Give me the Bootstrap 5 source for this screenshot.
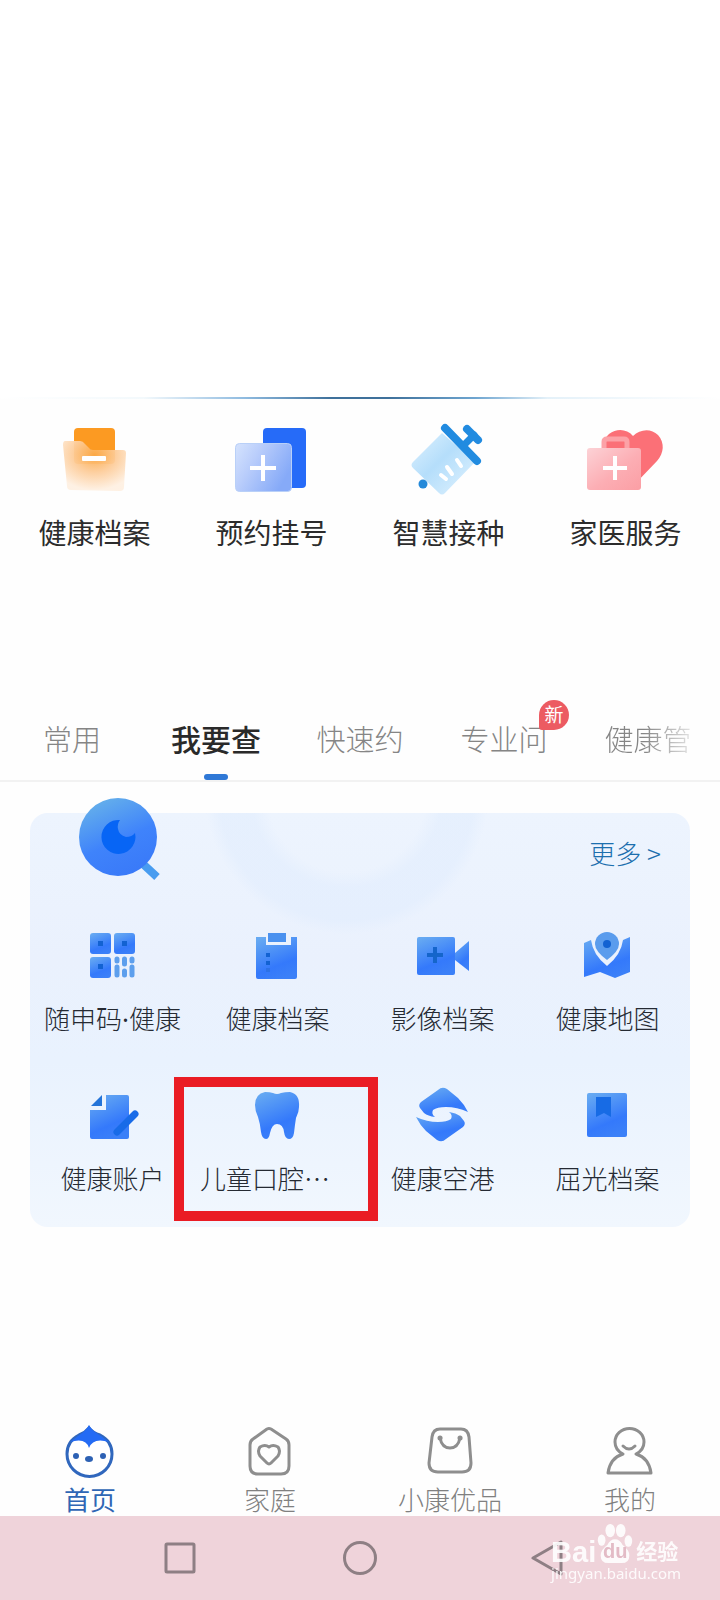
<!DOCTYPE html>
<html lang="zh-CN">
<head>
<meta charset="utf-8">
<meta name="viewport" content="width=device-width, initial-scale=1">
<title>健康首页</title>
<link href="https://cdn.jsdelivr.net/npm/bootstrap@5.3.0/dist/css/bootstrap.min.css" rel="stylesheet">
<style>
  body { font-family: "Noto Sans CJK SC", sans-serif; background: #fefefe; color: #2c2c2c; }
  svg { display: block; flex: none; }
  a, button { color: inherit; text-decoration: none; }
  .hero { height: 397px; background: #fff; }
  .hero-edge { height: 2px; background: linear-gradient(90deg, #fff 0%, #f3f9fc 20%, #8fbbe0 34%, #3f719b 46%, #3f719b 54%, #6ea5d0 66%, #e4f1f9 76%, #fff 100%); }
  .services { padding: 13px 6px 0; }
  .service-name { font-size: 28px; line-height: 40px; margin-top: 12px; }
  .tabs { margin-top: 152px; border-bottom: 2px solid #f2f2f2; }
  .tab-btn { flex: 1 1 0; border: 0; background: none; padding: 14px 0 22px; font-size: 29px; line-height: 40px; font-weight: 300; color: #858585; white-space: nowrap; }
  .tab-btn.active { font-size: 30px; font-weight: 500; color: #2a2a2a; }
  .tab-btn.active::after { content: ""; position: absolute; left: 50%; bottom: 0; width: 24px; height: 6px; margin-left: -12px; border-radius: 3px; background: #2f78d6; }
  .fading { background: linear-gradient(90deg, #858585 45%, #e4e4e4 100%); -webkit-background-clip: text; background-clip: text; color: transparent; }
  .new-tag { position: absolute; top: -4px; left: 107px; width: 30px; height: 30px; border-radius: 15px 15px 15px 3px; background: #ec5b62; color: #fff; font-size: 19px; line-height: 28px; font-weight: 400; }
  .panel { margin: 31px 30px 0; border-radius: 18px; padding-bottom: 29px; background: radial-gradient(circle at 48% -5%, transparent 0 80px, #dceafd66 96px 128px, transparent 142px), linear-gradient(180deg, #edf4fe 0%, #eaf1fd 35%, #e9f2fe 60%, #f1f7fe 100%); }
  .panel-head { height: 112px; padding: 20px 29px 0; }
  .lens { position: absolute; top: -16px; left: 47px; }
  .more { font-size: 26px; line-height: 40px; font-weight: 300; color: #1c6fae; }
  .tools { row-gap: 46px; }
  .tool-name { font-size: 26px; line-height: 40px; margin-top: 13px; font-weight: 300; color: #252a33; white-space: nowrap; }
  .mid-dot { font-family: "Noto Sans", sans-serif; font-weight: 400; }
  .tool-cut { align-self: stretch; padding-left: 5px; text-align: left; }
  .highlight { position: absolute; top: -8px; left: -21px; right: -18px; bottom: -23px; border: 10px solid #ea1c24; pointer-events: none; }
  .nav-name { font-size: 26px; line-height: 32px; margin-top: 3px; margin-bottom: 1px; font-weight: 300; color: #808080; }
  .nav-name.on { color: #2f66b5; font-weight: 400; }
  .system { height: 84px; padding: 0 90px; background: #efd3da; }
  .system button { flex: 1 1 0; border: 0; background: none; padding: 0; }
  .watermark { position: absolute; right: 39px; top: 6px; color: #fff; opacity: .9; font-family: "Liberation Sans", "Noto Sans CJK SC", sans-serif; pointer-events: none; }
  .wm-top { height: 42px; }
  .wm-bai { font-size: 29px; line-height: 24px; font-weight: 700; }
  .wm-du { position: absolute; left: 0; right: 0; bottom: 2px; font-size: 20px; line-height: 22px; font-weight: 700; color: #e2b9c4; text-align: center; }
  .wm-cn { font-size: 21px; line-height: 24px; font-weight: 700; margin-left: 2px; }
  .wm-url { font-family: "Noto Sans", sans-serif; font-size: 15px; line-height: 18px; }
</style>
</head>
<body>
<svg width="0" height="0" class="position-absolute" aria-hidden="true">
  <defs>
    <linearGradient id="blue" x1=".2" y1="0" x2=".6" y2="1"><stop offset="0" stop-color="#66a9f2"/><stop offset=".7" stop-color="#3479fb"/><stop offset="1" stop-color="#3b80f8"/></linearGradient>
    <linearGradient id="lensFill" x1=".25" y1="0" x2=".7" y2="1"><stop offset="0" stop-color="#66b1ea"/><stop offset=".55" stop-color="#3f83fb"/><stop offset="1" stop-color="#3979f8"/></linearGradient>
    <linearGradient id="glassBlue" x1="0" y1="0" x2="1" y2=".5"><stop offset="0" stop-color="#d5e3fd"/><stop offset=".4" stop-color="#b9cdfb"/><stop offset="1" stop-color="#86aaf8"/></linearGradient>
    <radialGradient id="glassOrange" cx=".5" cy=".28" r=".7"><stop offset="0" stop-color="#fba947"/><stop offset=".5" stop-color="#fdcd9b"/><stop offset="1" stop-color="#fef0e2"/></radialGradient>
    <linearGradient id="glassCyan" x1="0" y1="0" x2="1" y2="1"><stop offset="0" stop-color="#dff2fe"/><stop offset=".45" stop-color="#b5defb"/><stop offset="1" stop-color="#e1f3fe"/></linearGradient>
    <linearGradient id="glassPink" x1="0" y1="0" x2="1" y2="1"><stop offset="0" stop-color="#fcd2d6"/><stop offset=".55" stop-color="#fcaeb4"/><stop offset="1" stop-color="#fb9ea4"/></linearGradient>
  </defs>
</svg>

<div class="min-vh-100 d-flex flex-column">
  <header>
    <div class="hero"></div>
    <div class="hero-edge"></div>
  </header>

  <main>
    <nav class="services d-flex text-center" aria-label="主要服务">
      <a href="#" class="col-3 d-flex flex-column align-items-center">
        <svg width="100" height="88" viewBox="0 0 100 88"><rect x="29" y="16" width="41" height="36" rx="4" fill="#fc9a22"/><path d="M20 29h15q3 0 5 3l4 4q1 2 4 2h30q3 0 3 3l-2 34q0 4-4 4l-49-1q-4 0-4-4l-4-41q0-4 2-4z" fill="url(#glassOrange)" fill-opacity=".94"/><rect x="37" y="44" width="24" height="5" rx="1" fill="#fff"/></svg>
        <span class="service-name">健康档案</span>
      </a>
      <a href="#" class="col-3 d-flex flex-column align-items-center">
        <svg width="100" height="88" viewBox="0 0 100 88"><rect x="41" y="16" width="43" height="60" rx="4" fill="#266bf8"/><rect x="13.500" y="31.500" width="56" height="48" rx="4" fill="url(#glassBlue)" stroke="#b9d0f8"/><path d="M41 43v26M28 56h26" stroke="#fff" stroke-width="4"/></svg>
        <span class="service-name">预约挂号</span>
      </a>
      <a href="#" class="col-3 d-flex flex-column align-items-center">
        <svg width="100" height="88" viewBox="0 0 100 88"><circle cx="24" cy="72" r="4.500" fill="#2489d9"/><path d="M43 21L76 50L46 81Q43 84 40 81L14 56Q11 53 14 50z" fill="url(#glassCyan)"/><path d="M58 48l4 6M48 55l5 7M42 63l5 4" stroke="#fff" stroke-width="4" stroke-linecap="round"/><g stroke="#218be0" stroke-linecap="round"><path d="M46 16L78 49" stroke-width="8"/><path d="M68 17L79 28" stroke-width="8"/><path d="M75 23L65 33" stroke-width="7"/></g></svg>
        <span class="service-name">智慧接种</span>
      </a>
      <a href="#" class="col-3 d-flex flex-column align-items-center">
        <svg width="100" height="88" viewBox="0 0 100 88"><path d="M57 24C64 17 75 16 82 23C89 31 88 41 81 49L58 73L32 47C25 39 26 28 33 22C41 16 51 17 57 24z" fill="#fb7077"/><path d="M28 38V30Q28 27 31 27H48Q51 27 51 30V38" fill="none" stroke="#fca2a7" stroke-width="5"/><rect x="11" y="36" width="54" height="42" rx="3" fill="url(#glassPink)"/><path d="M39 44v24M27 56h24" stroke="#fff" stroke-width="4"/></svg>
        <span class="service-name">家医服务</span>
      </a>
    </nav>

    <div class="tabs d-flex" role="tablist">
      <button type="button" role="tab" class="tab-btn">常用</button>
      <button type="button" role="tab" class="tab-btn active position-relative" aria-selected="true">我要查</button>
      <button type="button" role="tab" class="tab-btn">快速约</button>
      <button type="button" role="tab" class="tab-btn position-relative">专业问<span class="new-tag">新</span></button>
      <button type="button" role="tab" class="tab-btn"><span class="fading">健康管</span></button>
    </div>

    <section class="panel position-relative">
      <svg class="lens" width="84" height="84" viewBox="0 0 84 84"><path d="M66 67l14 13" stroke="#489cf0" stroke-width="8"/><circle cx="41" cy="40" r="39" fill="url(#lensFill)"/><path d="M43 23A17 17 0 1 0 58 36Q55 40 49 40Q42 38 41 32Q40 27 43 23z" fill="#0765f5"/></svg>
      <div class="panel-head text-end"><a href="#" class="more">更多 &gt;</a></div>
      <div class="tools d-flex flex-wrap text-center">
        <a href="#" class="col-3 d-flex flex-column align-items-center">
          <svg width="60" height="60" viewBox="0 0 60 60"><g fill="url(#blue)"><rect x="7" y="8" width="21" height="21" rx="3"/><rect x="31" y="8" width="21" height="21" rx="3"/><rect x="7" y="32" width="21" height="21" rx="3"/></g><g fill="#1262d2"><rect x="15" y="16" width="5" height="5"/><rect x="39" y="16" width="5" height="5"/><rect x="15" y="39" width="5" height="5"/></g><path d="M34 34v2M41.500 34v5M49 34v2M34 42v8M41.500 46v4M49 42v8" stroke="#5d9fed" stroke-width="5" stroke-linecap="round"/></svg>
          <span class="tool-name">随申码<span class="mid-dot">·</span>健康</span>
        </a>
        <a href="#" class="col-3 d-flex flex-column align-items-center">
          <svg width="60" height="60" viewBox="0 0 60 60"><path d="M8 12h10v8h25v-8h6v40q0 2-2 2H10q-2 0-2-2z" fill="url(#blue)"/><rect x="20" y="8" width="18" height="9" fill="#4a91ef"/><path d="M18 28h4v4h-4zM18 36h4v4h-4z" fill="#1262d2"/><path d="M18 43h4v4h-4z" fill="#2d72e6"/></svg>
          <span class="tool-name">健康档案</span>
        </a>
        <a href="#" class="col-3 d-flex flex-column align-items-center">
          <svg width="60" height="60" viewBox="0 0 60 60"><rect x="4" y="12" width="38" height="38" rx="2" fill="url(#blue)"/><path d="M42 28L56 16V46L42 35z" fill="url(#blue)"/><path d="M22 22v16M14 30h16" stroke="#1565cb" stroke-width="4"/></svg>
          <span class="tool-name">影像档案</span>
        </a>
        <a href="#" class="col-3 d-flex flex-column align-items-center">
          <svg width="60" height="60" viewBox="0 0 60 60"><path d="M6 18L13 15Q15 30 29 41Q43 30 45 15L52 12V47L37 53L22 47L6 52z" fill="url(#blue)"/><path d="M29 35Q17 26 17 19A12 12 0 0 1 41 19Q41 26 29 35z" fill="#5a9ced"/><circle cx="29" cy="19" r="4" fill="#1262d2"/></svg>
          <span class="tool-name">健康地图</span>
        </a>
        <a href="#" class="col-3 d-flex flex-column align-items-center">
          <svg width="60" height="60" viewBox="0 0 60 60"><path d="M23 10H44q2 0 2 2V52q0 2-2 2H9q-2 0-2-2V25H23z" fill="url(#blue)"/><path d="M8 21L19 10V21z" fill="#2474d8"/><path d="M52 29L34 47" stroke="#186be8" stroke-width="7" stroke-linecap="round"/></svg>
          <span class="tool-name">健康账户</span>
        </a>
        <a href="#" class="col-3 d-flex flex-column align-items-center position-relative">
          <svg width="60" height="60" viewBox="0 0 60 60"><path d="M17 7Q22 7 25 8Q29 10 33 8Q37 7 42 7Q52 9 51 22Q51 27 48 33Q47 39 46 48Q45 54 41 54Q37 54 36 47Q35 39 29 39Q24 39 22 48Q21 54 18 54Q14 54 13 47Q12 38 10 32Q7 26 7 20Q7 9 17 7z" fill="url(#blue)"/></svg>
          <span class="tool-name tool-cut">儿童口腔…</span>
          <span class="highlight"></span>
        </a>
        <a href="#" class="col-3 d-flex flex-column align-items-center">
          <svg width="60" height="60" viewBox="0 0 60 60" fill="url(#blue)"><path id="wing" d="M25 5Q29 1 34 4L45 13Q51 19 55 27Q44 22 33 22Q24 22 20 25Q18 29 22 32Q15 31 11 28L7 23Q5 20 8 17z"/><path d="M33 54Q29 58 24 55L13 46Q7 40 3 32Q14 37 25 37Q34 37 38 34Q40 30 36 27Q43 28 47 31L51 36Q53 39 50 42z"/></svg>
          <span class="tool-name">健康空港</span>
        </a>
        <a href="#" class="col-3 d-flex flex-column align-items-center">
          <svg width="60" height="60" viewBox="0 0 60 60"><rect x="9" y="8" width="40" height="44" rx="2" fill="url(#blue)"/><path d="M18 12H33V32L26 28L18 32z" fill="#176be5"/></svg>
          <span class="tool-name">屈光档案</span>
        </a>
      </div>
    </section>
  </main>

  <footer class="mt-auto">
    <nav class="d-flex text-center" aria-label="底部导航">
      <a href="#" class="col-3 d-flex flex-column align-items-center">
        <svg width="60" height="60" viewBox="0 0 60 60"><path d="M29 8Q25 13 19 15Q7 21 7 34A22.500 22.500 0 0 0 52 34Q52 21 40 15Q33 13 29 8z" fill="#fff" stroke="#3067bd" stroke-width="3"/><path d="M29 5Q26 11 18 16L10 22Q26 17 29 28Q33 17 49 22L41 16Q32 11 29 5z" fill="#246bf4"/><circle cx="16" cy="36" r="3" fill="#2d61b4"/><circle cx="43" cy="36" r="3" fill="#2d61b4"/><ellipse cx="29" cy="39" rx="4" ry="3" fill="#2d61b4"/></svg>
        <span class="nav-name on">首页</span>
      </a>
      <a href="#" class="col-3 d-flex flex-column align-items-center">
        <svg width="60" height="60" viewBox="0 0 60 60" fill="none" stroke="#8e8e8e" stroke-width="3" stroke-linejoin="round"><path d="M27 9Q29 8 31 9L46 19Q49 21 49 25V46Q49 54 41 54H18Q10 54 10 46V25Q10 21 13 19z"/><path d="M29 27Q33 24 38 27Q41 31 38 36L31 43Q29 45 27 43L20 36Q17 31 20 27Q25 24 29 27z"/></svg>
        <span class="nav-name">家庭</span>
      </a>
      <a href="#" class="col-3 d-flex flex-column align-items-center">
        <svg width="60" height="60" viewBox="0 0 60 60" fill="none" stroke="#8e8e8e" stroke-width="3" stroke-linecap="round"><path d="M20 9H41Q48 9 49 17L51 43Q51 52 42 52H18Q9 52 9 43L12 17Q13 9 20 9z"/><path d="M20 18Q22 28 30 28Q38 28 40 18"/><path d="M20 18h.1M40 18h.1" stroke-width="5"/></svg>
        <span class="nav-name">小康优品</span>
      </a>
      <a href="#" class="col-3 d-flex flex-column align-items-center">
        <svg width="60" height="60" viewBox="0 0 60 60" fill="none" stroke="#8e8e8e" stroke-width="3" stroke-linecap="round" stroke-linejoin="round"><path d="M23 34Q10 38 8 53H51Q49 38 36 34Q44 30 44 22A14.500 13.500 0 0 0 15 22Q15 30 23 34z"/><path d="M23 26Q29 32 35 26"/></svg>
        <span class="nav-name">我的</span>
      </a>
    </nav>
    <div class="system d-flex align-items-center position-relative">
      <button type="button" class="d-flex justify-content-center" aria-label="多任务"><svg width="36" height="36" viewBox="0 0 36 36" fill="none" stroke="#8e7f84" stroke-width="3"><rect x="4" y="4" width="28" height="28" rx="1"/></svg></button>
      <button type="button" class="d-flex justify-content-center" aria-label="主屏幕"><svg width="36" height="36" viewBox="0 0 36 36" fill="none" stroke="#8e7f84" stroke-width="3"><circle cx="18" cy="18" r="15.500"/></svg></button>
      <button type="button" class="d-flex justify-content-center" aria-label="返回"><svg width="48" height="36" viewBox="0 0 48 36" fill="none" stroke="#8e7f84" stroke-width="3" stroke-linejoin="round"><path d="M17 18L45 2V34z"/></svg></button>
      <div class="watermark">
        <div class="wm-top d-flex align-items-end">
          <span class="wm-bai">Bai</span>
          <span class="position-relative">
            <svg width="38" height="42" viewBox="0 0 38 44" fill="#fff"><ellipse cx="5" cy="19" rx="4" ry="6"/><ellipse cx="14" cy="9" rx="5" ry="7"/><ellipse cx="25" cy="9" rx="5" ry="7"/><ellipse cx="33" cy="20" rx="4" ry="6"/><path d="M19 18Q24 18 27 24Q34 29 34 35Q34 43 26 43H12Q4 43 4 35Q4 29 11 24Q14 18 19 18z"/></svg>
            <span class="wm-du">du</span>
          </span>
          <span class="wm-cn">经验</span>
        </div>
        <div class="wm-url">jingyan.baidu.com</div>
      </div>
    </div>
  </footer>
</div>
<script src="https://cdn.jsdelivr.net/npm/bootstrap@5.3.0/dist/js/bootstrap.bundle.min.js"></script>
</body>
</html>
